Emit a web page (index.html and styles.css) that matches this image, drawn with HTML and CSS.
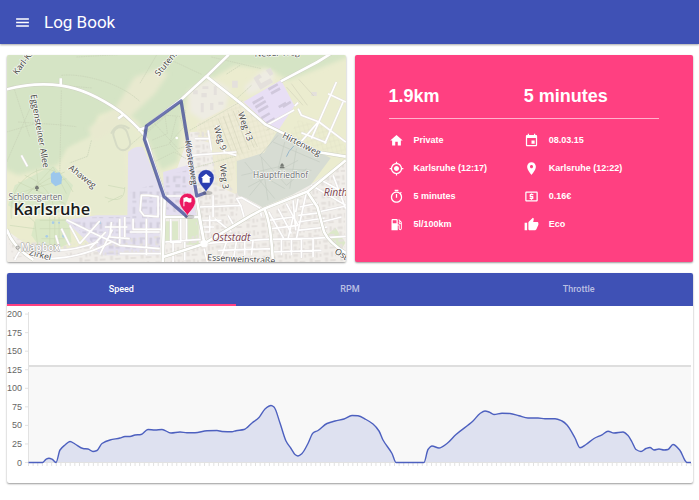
FILE: index.html
```html
<!DOCTYPE html>
<html lang="en">
<head>
<meta charset="utf-8">
<meta name="viewport" content="width=device-width, initial-scale=1">
<title>Log Book</title>
<link rel="stylesheet" href="styles.css">
</head>
<body>
<header class="toolbar">
  <button class="menu" type="button" aria-label="Menu"><svg viewBox="0 0 24 24"><path d="M3 18h18v-2H3v2zm0-5h18v-2H3v2zm0-7v2h18V6H3z"/></svg></button>
  <h1 class="title">Log Book</h1>
</header>
<main class="content">
  <div class="overview">
    <section class="card map" aria-label="Route map">
      <svg class="map-art" viewBox="6 9 1017 621" preserveAspectRatio="xMidYMid slice">
        <defs>
          <pattern id="blocks" width="46" height="38" patternUnits="userSpaceOnUse" patternTransform="rotate(-3)">
            <path class="building" d="M4 5h15v8H4zM25 4h7v15h-7zM37 8h6v9h-6zM7 20h9v13H7zM22 26h17v6H22z"/>
          </pattern>
          <pattern id="plots" width="13" height="17" patternUnits="userSpaceOnUse" patternTransform="rotate(-15)">
            <path d="M2 0V17M0 3H13" fill="none" stroke="#dbdac3" stroke-width="1"/>
          </pattern>
          <pattern id="campus" width="50" height="46" patternUnits="userSpaceOnUse">
            <path fill="#d3cfde" d="M5 4h23v6H13v12H5zM34 5h8v20h-8zM12 29h14v9H12zM33 32h12v6H33z"/>
          </pattern>
          <filter id="soft" x="-20%" y="-20%" width="140%" height="140%"><feGaussianBlur stdDeviation="7"/></filter>
        </defs>
        <path fill="#ebeccf" d="M0 0h1030v640H0z"/>
        <!-- woods -->
        <path filter="url(#soft)" fill="#d5e4c5" d="M0 0H1030V15L850 85 790 50 690 40 620 80 550 120 530 200 520 330 470 355 430 270 400 210 350 170 280 190 260 260 190 290 160 340 40 370 0 350z"/>
        <path filter="url(#soft)" fill="#e7ebcf" d="M190 290L280 240 300 200 350 180 415 260 360 300 370 490H190L150 390z"/>
        <path filter="url(#soft)" fill="#e8e9cf" d="M390 75l70-25 30 15-40 60-90 85-90 60-20-40 80-60z"/>
        <path fill="#d9e7c8" d="M30 400L145 340 205 400 175 480 60 490 10 460z"/>
        <path fill="#dae8c6" d="M92 500h100l8 70-30 15H105L80 550z"/>
        <path filter="url(#soft)" fill="#eeece3" d="M552 120L615 78 675 110 660 180 600 210 555 180z"/>
        <path filter="url(#soft)" fill="#eeece3" d="M720 105l60-55 28 12-8 40-70 28z"/>
        <!-- city ground -->
        <path fill="#f1eeea" d="M6 535l50 36 100 25 150-30 60-75h100l90-250 60-5 15 155 95 30 90 28 115-60 112-75V640H0z"/>
        <path fill="#e4e0ef" d="M370 300q20-20 45-15l60 148v75h-10V610H290L180 505l95-15h93z"/>
        <path fill="#e5dff0" d="M475 360l78-22 15 95 8 60H480z"/>
        <path fill="#e8dff5" d="M714 151L829 84l40 77-46 71-33-12z"/>
        <path fill="#eeebd5" d="M575 215l135-72 102 96-34 64-88 26 8 100-65-30-10-125-42-10z"/>
        <path fill="url(#plots)" d="M578 215l132-60 100 88-33 55-85 30-15 90-35-35-8-120-50-10zM880 205l85 20 58 60-2 36-110-45-60-20z"/>
        <path fill="#d7dcd3" d="M696 327l82-25 40-64 160 80-60 80-55 30-90 38-50-28-26-8z"/>
        <path fill="#dce8c9" d="M544 500h38v78h-38zM480 508h40v60h-40zM960 555l32-28 30 45-12 20z"/>
        <!-- buildings -->
        <path fill="url(#blocks)" d="M556 235l50 5 30 130 65 55-5 85 95-20 100-68 130-90V630H220l-60-40-135 30-15-65 150 25 310-30 20 20 85-20z"/>
        <path fill="url(#campus)" d="M378 415l84-20 10 95v115H300L185 500l100-5h95zM482 370l65-15 10 70-35 60-40-15z"/>
        <path class="building" d="M565 115h14v12h-14zm28-12h18v8h-18zm34 0h9v26h-9zm-37 20h16v13h-16zm-2 30h9v28h-9zm28 0h10v21h-10zm25-4h15v9h-15zM746 78l18-12 8 10-10 6 7 12 28-15 8 12-38 22zm37-23l14-8 9 19-10 6zM682 86h17v21h-17zM920 120h16v12h-16zM960 375h14v8h-14z"/>
        <path fill="#d0c8dc" d="M742 150l32-18 4 7-32 19zm8 12l31-18 4 7-31 19zm8 13l30-17 4 7-30 18zm31-66l28-15 4 6-28 16zm8 12l27-15 4 7-27 15zm35 40l24-15 4 7-24 15zm-50 50l26-15 4 7-26 14zm-14-16l25-14 4 6-25 15zm52-33l22-13 4 7-22 13z"/>
        <!-- footpaths -->
        <g fill="none" stroke="#c7d1b6" stroke-width="2" stroke-dasharray="5 2">
          <path d="M170 70Q220 65 290 86T405 148M172 100l90 8M170 115L165 370M25 100L75 255M40 210l120 8 55 6M455 10L405 95M6 330L95 125M215 15L340 8M6 240l85-25M530 148L370 285M260 265l-12 48-53 20M590 67L490 20M706 40l-42 27M740 100l-46 42M620 15L770 50"/>
          <path d="M440 205l80 85 35-10M430 240l55-50 40 3 20 60M435 293l55-15 47-53 5-50M480 185l8 60-47 20M448 330l60-30 36 20M515 195l-20 80 38 40M555 235L715 145M560 350l135-38"/>
        </g>
        <g fill="none" stroke="#cbd9b7" stroke-width="2">
          <path d="M20 500Q10 410 80 365T205 420M45 450L145 345 185 425M40 390l140 65M95 350l15 135M20 430l165-50M30 475q45-80 150-115M60 370q80 30 90 110M15 520l75 10M20 450l70 60 10 80"/>
          <path d="M105 505h85M105 530h90M110 560h75M135 495v95M150 495v95M163 495v95M300 435q60 25 60-30M310 450l42-20M310 400l50 10"/>
        </g>
        <g fill="none" stroke="#d6dbc5" stroke-width="6"><rect x="330" y="225" width="42" height="70" rx="21" transform="rotate(-18 351 260)"/><path d="M319 245q20-40 55-15"/></g>
        <g fill="none" stroke="#c4cbc1" stroke-width="2"><path d="M720 330l90 110M730 405l150-80M770 315l20 130M820 250l-55 60 80 90 60-50M805 270l140 60M840 270l-20 80 100 5M710 370l130-30M875 290l-20 120M735 430l45-55 60 35"/></g>
        <g fill="none" stroke="#d5d4bd" stroke-width="2"><path d="M640 200l45 110M655 192l45 115M670 184l43 120M685 176l48 118M700 175l48 112M720 200l38 85M845 105l50 55M860 95l48 65M882 82l45 50M785 235l20-10"/></g>
        <path fill="#9cc7ec" d="M138 366l10-9 3 6 13-2 8 14-2 20-18 8-13-12z"/>
        <g fill="#a9cce8"><circle cx="145" cy="512" r="4"/><circle cx="163" cy="512" r="3"/><circle cx="126" cy="553" r="4"/><circle cx="177" cy="552" r="5"/><circle cx="285" cy="512" r="4"/></g>
        <path d="M845 314l8-16 14-16" fill="none" stroke="#9ab8cb" stroke-width="3"/>
        <!-- side streets -->
        <g fill="none" stroke="#e2dedd" stroke-width="8" stroke-linejoin="round"><use href="#streets"/></g>
        <g fill="none" stroke="#fff" stroke-width="5" stroke-linejoin="round">
          <g id="streets">
            <path d="M185 503L270 545l75 35 120 10M225 575l60-68M255 590l48-50M285 608l38-75M320 510l-5 45 60 5M345 500v75M300 525h68M360 495v60M410 430h20l30 4v60l-42-3-12-15zM470 435v180M425 500v110M375 540h90M345 605h125M385 500v32h85"/>
            <path d="M478 432h80M498 496v75h30v-75M545 498v70M478 570l110-8M505 572v58M540 570v55M580 430l8 75 10 70M615 490v50h-30M590 505h60M588 525h40M625 430v65M583 465l125-5-12-20 15-3 55 32 4 25M708 460l10 35"/>
            <path d="M605 574l180-12 140-3 98-6M665 570l-20 60M695 568l-10 60M720 565v45M745 565l-5 45M795 562l10 60M830 560v50M860 560v50M890 558v60M925 560v55M598 590l10 40M630 500l50 40M670 490l20 35M640 595l160-5M800 600l150-5"/>
            <path d="M790 505l75-10-15 65M800 530l80-10M792 480l45 80M820 470l40 75M845 455l35 65M865 445l8 90M880 440l-7 40M885 465l55-12M880 490l70-8M880 510l80-12M878 535l90-10M905 420l-30 140M920 400l103 60M950 385l73 40M940 480l83-18M950 510l60-15M985 370l38 100"/>
            <path d="M110 592l10-22M165 590l-12-40M195 580l-25-50M225 575l-30-55M85 580q70 35 195-10M120 620q110 0 200-50M30 625q10-30 40-45M635 220l24 80 36 10M560 310l135-10M610 235l10 60M570 260h45"/>
            <path d="M788 218l80-44M870 162l10-10M880 170l10 20 53 20 80 60M970 125l53 25M995 90l-75 170M1015 150l-55 125M940 210l-60 70M890 242l75 30M50 310l18 33"/>
          </g>
        </g>
        <!-- main roads -->
        <g fill="none" stroke="#cfd1c4" stroke-width="11" stroke-linejoin="round"><use href="#roads"/></g>
        <g fill="none" stroke="#fff" stroke-width="8" stroke-linejoin="round">
          <g id="roads">
            <path d="M6 112Q90 90 170 101T345 178Q390 215 420 250M168 101V79M340 200l18-14M400 235l28-10"/>
            <path d="M420 250q15 40 22 70l38 112-6 198M428 220L530 142 605 73 672 8M605 73l112 88L783 218l65 32 90 50 85 14M828 88l110-58 40-25"/>
            <path d="M478 495h105l15 75M575 435l11 65 13 75M475 615L598 575 740 490 778 470 910 418 1023 325M778 470q20 35 26 155M908 420l30 45 20 75q15 32 65 63M6 532q16 50 80 92"/>
          </g>
        </g>
        <circle cx="598" cy="575" r="11" fill="#fff"/><circle cx="516" cy="258" r="4" fill="#fff"/>
        <!-- place names -->
        <g class="label">
          <text transform="translate(37 70) rotate(-53)">Karl-Kr</text>
          <text transform="translate(462 74) rotate(-50)">Stutens</text>
          <text transform="translate(750 14) rotate(-2)">Neuer Weg</text>
          <text transform="translate(77 129) rotate(80)">Eggensteiner Allee</text>
          <text transform="translate(190 351) rotate(38)">Ahaweg</text>
          <text transform="translate(699 184) rotate(71)">Weg 13</text>
          <text transform="translate(627 225) rotate(73)">Weg 9</text>
          <text transform="translate(645 338) rotate(83)">Weg 3</text>
          <text transform="translate(831 256) rotate(27)">Hirtenweg</text>
          <text transform="translate(607 625) rotate(3)">Essenweinstraße</text>
          <text transform="translate(72 609) rotate(14)">Zirkel</text>
          <text transform="translate(988 602) rotate(34)">Ost</text>
        </g>
        <g class="label place"><text x="745" y="377">Hauptfriedhof</text><text x="11" y="444">Schlossgarten</text></g>
        <g class="label district"><text x="622" y="566">Oststadt</text><text x="957" y="431">Rinth</text></g>
        <text class="label city" x="26" y="489">Karlsruhe</text>
        <text class="label brand" x="47" y="597">Mapbox</text><circle cx="39" cy="587" r="5" fill="#d8d5d0" stroke="#888" stroke-width="2"/>
        <path fill="#777b75" d="M827 344v-5q5-11 10 0v5zm-2 1h14v4h-14zM91 411v-5q5-11 11 0v5zm3 1h5v4h-5z"/>
        <!-- driven route -->
        <path class="route" d="M604 422l-28 10L529 147 425 222l-6 40 59 172 70 61"/>
        <g class="label"><text transform="translate(540 267) rotate(81)">Klosterweg</text></g>
        <ellipse cx="608" cy="423" rx="15" ry="6" fill="#4444" /><ellipse cx="554" cy="494" rx="15" ry="6" fill="#4444"/>
        <path fill="#2a3eb1" stroke="#fff" stroke-opacity=".6" stroke-width="2" d="M604 420c-5-12-24-24-24-43a24 24 0 0 1 48 0c0 19-19 31-24 43z"/>
        <path fill="#fff" d="M604 365l15 13h-4v14h-22v-14h-4z"/>
        <path fill="#eb1761" stroke="#fff" stroke-opacity=".6" stroke-width="2" d="M548 491c-5-12-24-24-24-43a24 24 0 0 1 48 0c0 19-19 31-24 43z"/>
        <path fill="#fff" d="M536 437h3v26h-3zM539 437q6-4 11 0t10 0v13q-6 3-11 0t-10 0z"/>
      </svg>
    </section>
    <section class="card trip">
      <div class="totals"><h2>1.9km</h2><h2>5 minutes</h2></div>
      <ul class="facts">
        <li><svg viewBox="0 0 24 24"><path d="M10 20v-6h4v6h5v-8h3L12 3 2 12h3v8z"/></svg>Private</li>
        <li><svg viewBox="0 0 24 24"><path d="M17 12h-5v5h5v-5zM16 1v2H8V1H6v2H5c-1.11 0-1.99.9-1.99 2L3 19c0 1.1.89 2 2 2h14c1.1 0 2-.9 2-2V5c0-1.1-.9-2-2-2h-1V1h-2zm3 18H5V8h14v11z"/></svg>08.03.15</li>
        <li><svg viewBox="0 0 24 24"><path d="M12 8c-2.21 0-4 1.79-4 4s1.79 4 4 4 4-1.79 4-4-1.79-4-4-4zm8.94 3c-.46-4.17-3.77-7.48-7.94-7.94V1h-2v2.06C6.83 3.52 3.52 6.83 3.06 11H1v2h2.06c.46 4.17 3.77 7.48 7.94 7.94V23h2v-2.06c4.17-.46 7.48-3.77 7.94-7.94H23v-2h-2.06zM12 19c-3.87 0-7-3.13-7-7s3.13-7 7-7 7 3.13 7 7-3.13 7-7 7z"/></svg>Karlsruhe (12:17)</li>
        <li><svg viewBox="0 0 24 24"><path d="M12 2C8.13 2 5 5.13 5 9c0 5.25 7 13 7 13s7-7.75 7-13c0-3.87-3.13-7-7-7zm0 9.5c-1.38 0-2.5-1.12-2.5-2.5s1.12-2.5 2.5-2.5 2.5 1.12 2.5 2.5-1.12 2.5-2.5 2.5z"/></svg>Karlsruhe (12:22)</li>
        <li><svg viewBox="0 0 24 24"><path d="M15 1H9v2h6V1zm-4 13h2V8h-2v6zm8.03-6.61l1.42-1.42c-.43-.51-.9-.99-1.41-1.41l-1.42 1.42C16.07 4.74 14.12 4 12 4c-4.97 0-9 4.03-9 9s4.02 9 9 9 9-4.03 9-9c0-2.12-.74-4.07-1.97-5.61zM12 20c-3.87 0-7-3.13-7-7s3.13-7 7-7 7 3.13 7 7-3.13 7-7 7z"/></svg>5 minutes</li>
        <li><svg viewBox="0 0 24 24"><path d="M11 17h2v-1h1c.55 0 1-.45 1-1v-3c0-.55-.45-1-1-1h-3v-1h4V8h-2V7h-2v1h-1c-.55 0-1 .45-1 1v3c0 .55.45 1 1 1h3v1H9v2h2v1zm9-13H4c-1.11 0-1.99.89-1.99 2L2 18c0 1.11.89 2 2 2h16c1.11 0 2-.89 2-2V6c0-1.11-.89-2-2-2zm0 14H4V6h16v12z"/></svg>0.16€</li>
        <li><svg viewBox="0 0 24 24"><path d="M19.77 7.23l.01-.01-3.72-3.72L15 4.56l2.11 2.11c-.94.36-1.61 1.26-1.61 2.33 0 1.38 1.12 2.5 2.5 2.5.36 0 .69-.08 1-.21v7.21c0 .55-.45 1-1 1s-1-.45-1-1V14c0-1.1-.9-2-2-2h-1V5c0-1.1-.9-2-2-2H6c-1.1 0-2 .9-2 2v16h10v-7.5h1.5v5c0 1.38 1.12 2.5 2.5 2.5s2.5-1.12 2.5-2.5V9c0-.69-.28-1.32-.73-1.77zM12 10H6V5h6v5zm6 0c-.55 0-1-.45-1-1s.45-1 1-1 1 .45 1 1-.45 1-1 1z"/></svg>5l/100km</li>
        <li><svg viewBox="0 0 24 24"><path d="M1 21h4V9H1v12zm22-11c0-1.1-.9-2-2-2h-6.31l.95-4.57.03-.32c0-.41-.17-.79-.44-1.06L14.17 1 7.59 7.59C7.22 7.95 7 8.45 7 9v10c0 1.1.9 2 2 2h9c.83 0 1.54-.5 1.84-1.22l3.02-7.05c.09-.23.14-.47.14-.73v-1.91l-.01-.01L23 10z"/></svg>Eco</li>
      </ul>
    </section>
  </div>
  <section class="card history">
    <div class="tabs" role="tablist">
      <button class="tab active" type="button" role="tab" aria-selected="true">Speed</button>
      <button class="tab" type="button" role="tab" aria-selected="false">RPM</button>
      <button class="tab" type="button" role="tab" aria-selected="false">Throttle</button>
    </div>
    <svg class="chart" id="chart" viewBox="7 306 686 177" role="img" aria-label="Speed over time">
      <path class="band" d="M29 366H691V462H29z"/>
      <path class="limit" d="M29 366H691"/>
      <path class="axis" d="M28.500 312V466"/>
      <g id="scale"></g>
      <path class="area" id="area"/>
      <path class="axis" id="ticks"/>
      <path class="line" id="line"/>
    </svg>
  </section>
</main>
<script src="app.js"></script>
</body>
</html>
```
FILE: styles.css
```css
* { box-sizing: border-box; }

body {
  margin: 0;
  background: #fff;
  font-family: "Liberation Sans", Arial, sans-serif;
  color: #fff;
}

button {
  border: 0;
  padding: 0;
  background: none;
  color: inherit;
  font: inherit;
}

svg { display: block; }

.toolbar {
  display: flex;
  align-items: center;
  gap: 13px;
  height: 44px;
  padding: 0 14px;
  background: #3f51b5;
  box-shadow: 0 1px 2px rgba(0, 0, 0, .35);
}

.menu svg {
  width: 17px;
  height: 17px;
  fill: #fff;
}

.title {
  margin: 0;
  font: 400 17px/24px Roboto, sans-serif;
}

.content {
  display: grid;
  gap: 11px;
  padding: 11px 6px 11px 7px;
}

.overview {
  display: grid;
  grid-template-columns: 1fr 1fr;
  gap: 9px;
}

.card {
  overflow: hidden;
  min-width: 0;
  border-radius: 2px;
  background: #fff;
  box-shadow: 0 1px 2px rgba(0, 0, 0, .4);
}

.map-art {
  width: 100%;
  height: 100%;
}

.building { fill: #e4e0dc; }

.label {
  font: 26px "Open Sans", "Noto Sans", sans-serif;
  fill: #45443f;
  stroke: rgba(255, 255, 255, .75);
  stroke-width: 5px;
  stroke-linejoin: round;
  paint-order: stroke;
}

.place { font-size: 25px; fill: #6c6c70; }
.district { font-size: 31px; font-style: italic; fill: #7b4450; }
.city { font-size: 49px; font-weight: 600; fill: #1a1a1a; stroke-width: 8px; }

.brand {
  font-size: 30px;
  font-weight: 600;
  fill: #fff;
  stroke: #a5a3a0;
  stroke-width: 3px;
}

.route {
  fill: none;
  stroke: #3c4796;
  stroke-opacity: .75;
  stroke-width: 10px;
  stroke-linejoin: round;
}

.trip {
  padding: 29px 34px 24px;
  background: #ff4081;
}

.totals,
.facts {
  display: grid;
  grid-template-columns: 1fr 1fr;
}

.totals {
  padding-bottom: 10px;
  border-bottom: 1px solid #ffb3cd;
}

.totals h2 {
  margin: 0;
  font-size: 18px;
  line-height: 24px;
}

.facts {
  margin: 7px 0 0;
  padding: 0;
  list-style: none;
  font-size: 9px;
  font-weight: 700;
  line-height: 28px;
}

.facts li {
  display: flex;
  align-items: center;
  gap: 10px;
  white-space: nowrap;
}

.facts svg {
  width: 15px;
  height: 15px;
  fill: #fff;
}

.tabs {
  display: grid;
  grid-template-columns: repeat(3, 1fr);
  background: #3f51b5;
}

.tab {
  height: 33px;
  border-bottom: 2px solid transparent;
  color: rgba(255, 255, 255, .65);
  font: 500 9px/16px Roboto, sans-serif;
}

.tab.active {
  border-bottom-color: #ff4081;
  color: #fff;
}

.chart {
  width: 100%;
  height: auto;
}

.chart text {
  font-size: 9px;
  fill: #666;
  text-anchor: end;
}

.band { fill: #f8f8f8; }
.limit { fill: none; stroke: #dedede; stroke-width: 2px; }
.axis { fill: none; stroke: #e2e2e2; stroke-width: 1px; }
.area { fill: #dee1f0; }
.line { fill: none; stroke: #4d60bf; stroke-width: 1.4px; stroke-linejoin: round; }
```
FILE: app.js
```js
const BASE = 462.5;
const PER_UNIT = 0.742;

// Recorded speed trace as [x, y] pairs in chart units.
const trace = [
  [28.5,462.5],[42.5,462.5],[46,459.3],[49,458.3],[52,459.2],[56,462.5],[60,450],[65,445],[70,441.5],[75,444],
  [83,448.5],[88,449],[93,451.5],[97,450.5],[102,443.5],[110,440],[120,438],[125,436.5],[130,436.5],[135,435],
  [141,434.5],[148,429.5],[155,430],[162,429.5],[171,433],[180,432],[187,432.7],[195,432.7],[207,430.7],
  [217,430.5],[222,431.5],[232,431.8],[236,430.7],[244,429.5],[252,423],[259,417.5],[265,409],[271,405.5],
  [274,407],[280,423],[286,441],[291,448.5],[295,454.5],[298,456],[302,453.5],[308,443.5],[313,433],
  [318,430.5],[327,423.5],[335,421],[344,419],[352,415.5],[358,415.8],[366,419.5],[373,424],[379,431],
  [383,440],[392,453.5],[396,462.5],[424,462.5],[428,449.5],[432,446],[439,448],[447,443.5],[456,434.5],
  [473,421],[480,413.5],[485,411],[489,412],[494,414.5],[502,413.3],[510,413.5],[519,415.8],[528,418],
  [538,418],[545,418.8],[555,418.7],[562,421],[567,425],[575,438],[580,447.7],[586,444.5],[594,438.5],
  [602,434.8],[608,431.2],[614,433],[623,432],[628,435.5],[632,442],[636,449.5],[641,451.5],[646,448.5],
  [650,447.5],[654,450],[659,449],[664,450],[668,449.5],[673,444.5],[680,450.5],[685,460.5],[687,462.5],[691,462.5]
];

// Monotone cubic interpolation keeps the curve from dipping below zero.
function smooth(points) {
  const slope = i => (points[i + 1][1] - points[i][1]) / (points[i + 1][0] - points[i][0]);
  const tangent = points.map((p, i) => {
    if (i === 0 || i === points.length - 1) return 0;
    const a = slope(i - 1), b = slope(i);
    return a * b <= 0 ? 0 : 2 * a * b / (a + b);
  });
  let d = `M${points[0]}`;
  for (let i = 0; i < points.length - 1; i++) {
    const [x0, y0] = points[i], [x1, y1] = points[i + 1], h = (x1 - x0) / 3;
    d += `C${x0 + h},${y0 + tangent[i] * h} ${x1 - h},${y1 - tangent[i + 1] * h} ${x1},${y1}`;
  }
  return d;
}

const curve = smooth(trace);
document.getElementById('line').setAttribute('d', curve);
document.getElementById('area').setAttribute('d', curve + `V${BASE}H28.5Z`);

let marks = `M29 ${BASE}H691`;
for (let i = 0; i <= 143; i++) marks += `M${28.5 + i * 662.5 / 143} 463v3`;
document.getElementById('ticks').setAttribute('d', marks);

let scale = '';
for (let v = 0; v <= 200; v += 25) {
  const y = BASE - v * PER_UNIT;
  scale += `<path class="axis" d="M25 ${y}h4"/><text x="22" y="${y + 3}">${v}</text>`;
}
document.getElementById('scale').innerHTML = scale;
```
